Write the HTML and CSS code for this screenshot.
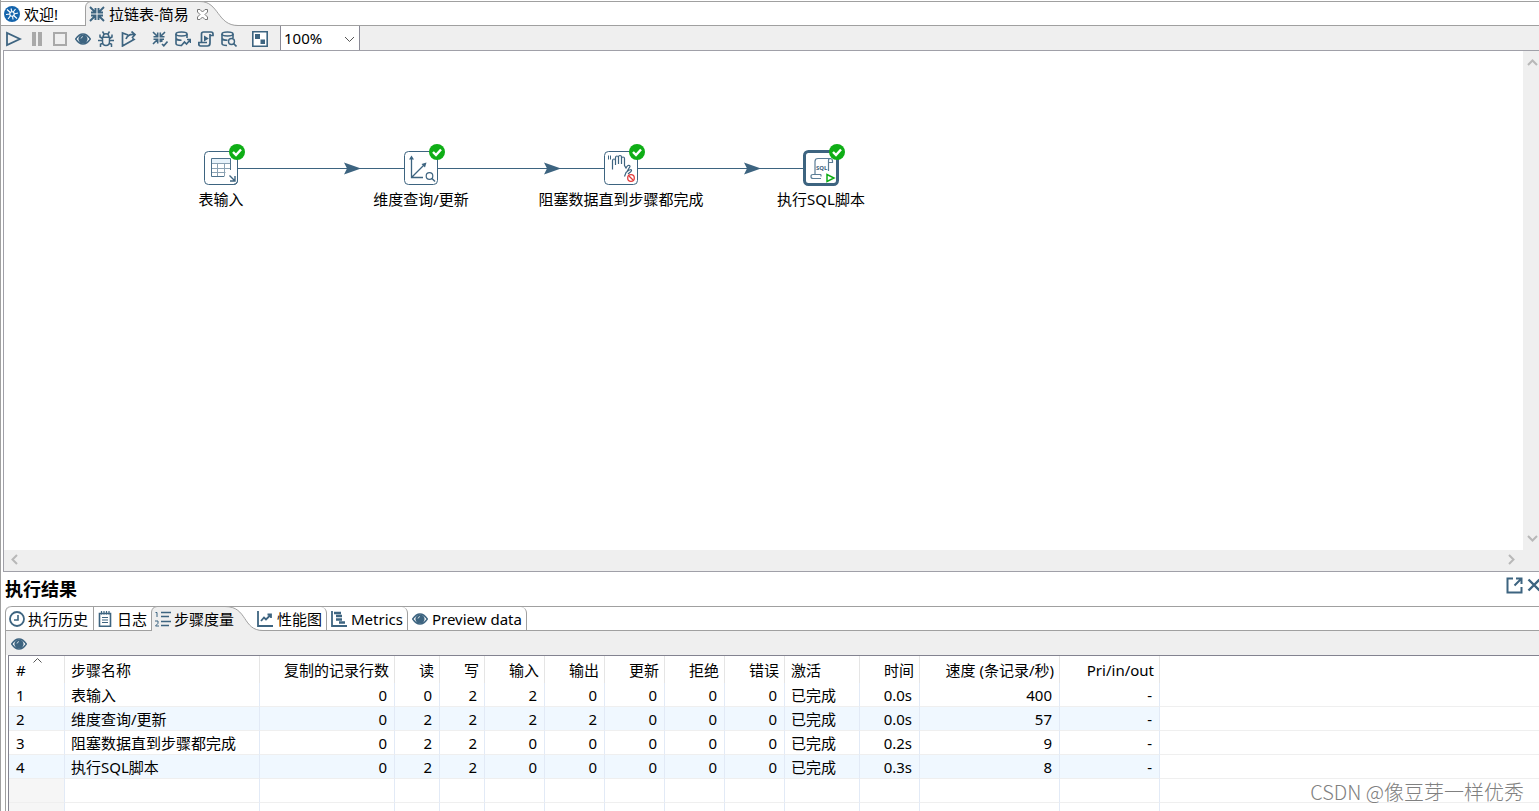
FILE: index.html
```html
<!DOCTYPE html>
<html lang="zh-CN">
<head>
<meta charset="utf-8">
<title>拉链表-简易</title>
<link rel="stylesheet" href="styles.css">
</head>
<body>
<svg class="defs" aria-hidden="true">
  <symbol id="eye" viewBox="0 0 16 16"><path d="M.700 8Q4 3 8 3T15.300 8Q12 13 8 13T.700 8Z" fill="#fff" stroke="#3d6480" stroke-width="1.400"/><circle cx="8" cy="8" r="4.600" fill="#3d6480"/><path d="M6 7.500Q6.200 5.800 8 5.600" stroke="#c9d6de" fill="none"/></symbol>
  <symbol id="shrink" viewBox="0 0 16 16"><path d="M1 1l5 5M15 1l-5 5M1 15l5-5M15 15l-5-5M2 6.500h4.500V2M9.500 2v4.500H14M2 9.500h4.500V14M9.500 14V9.500H14" fill="none" stroke="#3d6480" stroke-width="1.900"/></symbol>
  <symbol id="check" viewBox="0 0 16 16"><circle cx="8" cy="8" r="8" fill="#0fae16"/><path d="M4 8l3 3 5-5.500" stroke="#fff" stroke-width="2.400" fill="none"/></symbol>
  <symbol id="db" viewBox="0 0 16 16"><g fill="none" stroke="#3d6480" stroke-width="1.600"><ellipse cx="6.500" cy="3" rx="5.500" ry="2"/><path d="M1 3v9.500q0 2 5 2M1 7.500q1 1.800 5.500 1.800M12 3v4"/></g></symbol>
</svg>

<main class="app">
  <section class="editor">
    <nav class="tabs">
      <button class="tab tab-welcome"><svg class="icon" viewBox="0 0 16 16"><circle cx="8" cy="8" r="8" fill="#1464ac"/><g stroke="#fff" stroke-width="1.100" fill="none"><path d="M3 3.500l10 9M4 13l7.500-10M2 8.500l4-.500M10 8l4-1M7 2.500l1 3.500M8.500 10l.500 3.500"/><circle cx="8" cy="8" r="2.200" fill="#1464ac"/></g></svg>欢迎!</button>
      <button class="tab tab-active tab-file">
        <svg class="tab-shape" width="154" height="25" viewBox="0 0 154 25"><path d="M.500 25V6Q1 1 6 .500H115C134 .500 132 24.500 153 24.500V25Z" fill="#efefef"/><path d="M.500 25V6Q1 1 6 .500H115C134 .500 132 24.500 153 24.500" fill="none" stroke="#a0a0a0"/></svg>
        <svg class="icon"><use href="#shrink"/></svg><span>拉链表-简易</span>
        <svg class="close" width="11" height="11" viewBox="0 0 11 11"><path d="M.500 .500h2.500l2.500 2.500 2.500-2.500h2.500v2.500L8 5.500 10.500 8v2.500H8L5.500 8 3 10.500H.500V8L3 5.500 .500 3Z" fill="#fff" stroke="#777"/></svg>
      </button>
    </nav>

    <div class="toolbar">
      <button class="tool" aria-label="运行"><svg class="icon" viewBox="0 0 16 16"><path d="M1 2v12l13-6Z" fill="none" stroke="#3d6480" stroke-width="1.800"/></svg></button>
      <button class="tool" aria-label="暂停"><svg class="icon" viewBox="0 0 16 16"><path d="M3 1h4v14H3zM9 1h4v14H9z" fill="#a9a9a9"/></svg></button>
      <button class="tool" aria-label="停止"><svg class="icon" viewBox="0 0 16 16"><path d="M2 2h12v12H2z" fill="none" stroke="#a9a9a9" stroke-width="2"/></svg></button>
      <button class="tool" aria-label="预览"><svg class="icon"><use href="#eye"/></svg></button>
      <button class="tool" aria-label="调试"><svg class="icon" viewBox="0 0 16 16"><g fill="none" stroke="#3d6480" stroke-width="1.500"><path d="M5.200 5.500Q5.200 2.800 8 2.800t2.800 2.700M4.500 6.200h7v4.300Q11.500 14.500 8 14.500T4.500 10.500ZM6 3L4.500 .500M10 3l1.500-2.500M4.500 7.500L2 6V3.500M11.500 7.500L14 6V3.500M4.500 9.500H0M11.500 9.500H16M5 12l-2.500 1.200V16M11 12l2.500 1.200V16"/></g></svg></button>
      <button class="tool" aria-label="重放"><svg class="icon" viewBox="0 0 16 16"><path d="M7 4L1.500 2v13l11.500-6.500-1.500-1M5 8Q7 2.700 13.500 3.500M10.500 .500l3.500 3-3 3.500" fill="none" stroke="#3d6480" stroke-width="1.700"/></svg></button>
      <button class="tool tool-gap" aria-label="校验"><svg class="icon" viewBox="0 0 16 16"><path d="M1 1l4.500 4.500M13 1L8.500 5.500M1 13l4.500-4.500M1.500 5.700h4.200V1.500M8.300 1.500v4.200h4.200M1.500 8.300h4.200v4.200M12 8.300H8.300v3M8.500 8.500l2 2M10 13l1.800 1.800 3.700-4.300" fill="none" stroke="#3d6480" stroke-width="1.600"/></svg></button>
      <button class="tool" aria-label="影响分析"><svg class="icon"><use href="#db"/><path d="M6 15l3.500-4 2 2L15 9M12 8.500h3.500V12" fill="none" stroke="#3d6480" stroke-width="1.600"/></svg></button>
      <button class="tool" aria-label="生成SQL"><svg class="icon" viewBox="0 0 16 16"><path d="M3.500 11V3q0-2 2-2h7.500q2 0 2 2v1.500h-3M12 3v9q0 3-2.500 3H2.500Q.800 15 .800 13v-1.500H9" fill="none" stroke="#3d6480" stroke-width="1.700"/><path d="M6 4.500v6L10.800 7.500Z" fill="#3d6480"/></svg></button>
      <button class="tool" aria-label="浏览数据库"><svg class="icon"><use href="#db"/><circle cx="10.500" cy="10.500" r="3" fill="#efefef" stroke="#3d6480" stroke-width="1.400"/><path d="M12.500 12.500l3 3" stroke="#3d6480" stroke-width="1.600"/></svg></button>
      <button class="tool tool-gap" aria-label="显示结果"><svg class="icon" viewBox="0 0 16 16"><path d="M.800 .800h14.400v14.400H.800z" fill="#fff" stroke="#3d6480" stroke-width="1.600"/><path d="M3 3h5v5H3zM8.500 8.500h4.500v4.500H8.500z" fill="#3d6480"/></svg></button>
      <div class="zoom">
        <select class="zoom-select" aria-label="缩放"><option>100%</option></select>
        <svg class="zoom-arrow" width="11" height="7" viewBox="0 0 11 7"><path d="M1 1l4.500 4.500L10 1" fill="none" stroke="#555"/></svg>
      </div>
    </div>

    <div class="canvas-frame">
      <div class="canvas">
        <svg class="hops" width="900" height="240" viewBox="0 0 900 240">
          <path d="M234 117.500H400M434 117.500H600M634 117.500H800" stroke="#3d6480"/>
          <path d="M340 111.500l17 6-17 6 3-6ZM540 111.500l17 6-17 6 3-6ZM740 111.500l17 6-17 6 3-6Z" fill="#3d6480"/>
        </svg>
        <div class="node node-1">
          <svg class="node-icon" viewBox="0 0 34 34"><rect x=".500" y=".500" width="33" height="33" rx="4" fill="#fff" stroke="#3d6480"/><path d="M8 8h18v4H8z" fill="#e8f3fb"/><path d="M7.500 12.500h19M7.500 17.500h19M7.500 21.500h14M13.500 12.500v13M20.500 12.500v13" fill="none" stroke="#8ba2b3"/><path d="M20 25.500H7.500v-18h19V19" fill="none" stroke="#4d718b"/><path d="M23 21h10v10H23z" fill="#fff"/><path d="M25.500 24.500l5 5M31 25v5h-5" fill="none" stroke="#3d6480" stroke-width="1.400"/><path d="M33.500 17v12q0 4.500-4 4.500H20" fill="none" stroke="#3d6480"/></svg>
          <svg class="badge"><use href="#check"/></svg><span class="label">表输入</span>
        </div>
        <div class="node node-2">
          <svg class="node-icon" viewBox="0 0 34 34"><rect x=".500" y=".500" width="33" height="33" rx="4" fill="#fff" stroke="#3d6480"/><path d="M7.500 7v19.500H19M7.500 26.500L20.500 13.500" fill="none" stroke="#3d6480" stroke-width="1.300"/><path d="M7.500 4.500l2.500 4H5zM22.500 11.500l-1.500 5-3.500-3.500z" fill="#3d6480"/><circle cx="25.500" cy="25" r="3.300" fill="none" stroke="#3d6480" stroke-width="1.200"/><path d="M28 27.500l3 3" stroke="#3d6480" stroke-width="1.400"/></svg>
          <svg class="badge"><use href="#check"/></svg><span class="label">维度查询/更新</span>
        </div>
        <div class="node node-3">
          <svg class="node-icon" viewBox="0 0 34 34"><rect x=".500" y=".500" width="33" height="33" rx="4" fill="#fff" stroke="#3d6480"/><path d="M4.500 4.500v4M6.500 4.500v4" stroke="#3d6480"/><path d="M8.500 18.500V10q0-2 1.500-2t1.500 2v4V7q0-2 1.500-2t1.500 2v6V6q0-1.500 1.500-1.500T17.500 6v7V7.500q0-1.500 1.500-1.500t1.500 1.500v7l1.500 2.500q1-2 2-2.500 2-.500 2 1l-3 5M8.500 18.500v-4M20.500 25.500l1.500-4q3-3 5-3 1 1 0 2l-3 2.500" fill="none" stroke="#3d6480" stroke-width="1.200"/><circle cx="27" cy="27" r="3.300" fill="#fff" stroke="#e23c3c" stroke-width="1.300"/><path d="M25 25l4 4" stroke="#e23c3c" stroke-width="1.300"/></svg>
          <svg class="badge"><use href="#check"/></svg><span class="label">阻塞数据直到步骤都完成</span>
        </div>
        <div class="node node-4">
          <svg class="node-icon" viewBox="0 0 34 34"><rect x="0.500" y="0.500" width="33" height="33" rx="4" fill="#fff" stroke="#3d6480" stroke-width="3"/><path d="M11 23V10.500q0-3 3-3h12q2.500 0 2.500 2.500v1.500h-4M24.500 11.500V9.500q0-2 2-2M24.500 11.500V20M17 23.500H9q-2 0-2 2t2 2h8M17 23.500v2" fill="none" stroke="#5b7d96" stroke-width="1.200"/><text x="12" y="19" class="sql">SQL</text><path d="M23 23.500v7l7-3.500Z" fill="#fff" stroke="#0fae16" stroke-width="1.500"/></svg>
          <svg class="badge"><use href="#check"/></svg><span class="label">执行SQL脚本</span>
        </div>
      </div>
      <div class="scroll-v"><svg width="11" height="7" viewBox="0 0 11 7"><path d="M1 6l4.500-4.500L10 6" class="arrow"/></svg><svg width="11" height="7" viewBox="0 0 11 7"><path d="M1 1l4.500 4.500L10 1" class="arrow"/></svg></div>
      <div class="scroll-h"><svg width="7" height="11" viewBox="0 0 7 11"><path d="M6 1L1.500 5.500 6 10" class="arrow"/></svg><svg width="7" height="11" viewBox="0 0 7 11"><path d="M1 1l4.500 4.500L1 10" class="arrow"/></svg></div>
    </div>
  </section>

  <section class="results">
    <header class="results-head">
      <h2 class="results-title">执行结果</h2>
      <div class="results-actions">
        <button class="tool-plain" aria-label="最大化"><svg width="17" height="17" viewBox="0 0 17 17"><path d="M7 1.500H1.500v14h14V10M10 1.500h5.500V7M15 2L8.500 8.500" fill="none" stroke="#3d6480" stroke-width="2"/></svg></button>
        <button class="tool-plain" aria-label="关闭"><svg width="14" height="14" viewBox="0 0 14 14"><path d="M1.500 1.500l11 11M12.500 1.500l-11 11" stroke="#3d6480" stroke-width="2.400"/></svg></button>
      </div>
    </header>
    <div class="results-body">
      <nav class="tabs tabs-results">
        <button class="tab tab-sub tab-history"><svg class="icon" viewBox="0 0 16 16"><circle cx="8" cy="8" r="7" fill="none" stroke="#3d6480" stroke-width="1.800"/><path d="M9 4v5H5" fill="none" stroke="#3d6480" stroke-width="1.600"/></svg>执行历史</button>
        <button class="tab tab-sub tab-log"><svg class="icon" viewBox="0 0 16 16"><path d="M2.500 2.500h11v12.700h-11z" fill="none" stroke="#3d6480" stroke-width="1.600"/><path d="M4.500 0v3.500M7 0v3.500M9.500 0v3.500M12 0v3.500M5 6.500h6M5 9h6M5 11.500h6" stroke="#3d6480" stroke-width="1.200"/></svg>日志</button>
        <button class="tab tab-sub tab-active tab-metrics">
          <svg class="tab-shape" width="113" height="25" viewBox="0 0 113 25"><path d="M.500 25V6Q1 1 6 .500H74C97 .500 91 24.500 112 24.500V25Z" fill="#efefef"/><path d="M.500 25V6Q1 1 6 .500H74C97 .500 91 24.500 112 24.500" fill="none" stroke="#a0a0a0"/></svg>
          <svg class="icon" viewBox="0 0 16 16"><path d="M6 1.500h10M6 5.500h8M6 10.500h10M6 14.500h8" stroke="#3d6480" stroke-width="1.400"/><path d="M.500 1.500h1.500V6M0 10h3v2.300L.500 15H4" fill="none" stroke="#3d6480"/></svg><span>步骤度量</span>
        </button>
        <button class="tab tab-sub tab-right"><svg class="icon" viewBox="0 0 16 16"><path d="M1 0v15h15M4 10l3-3.500 2 2L13.500 4M10.500 3.500H14V7" fill="none" stroke="#3d6480" stroke-width="1.800"/></svg>性能图</button>
        <button class="tab tab-sub tab-right"><svg class="icon" viewBox="0 0 16 16"><path d="M1 0v15h15" fill="none" stroke="#3d6480" stroke-width="1.800"/><path d="M3 2h7M5 5h6M5 8.500h6M8 11.500h6" stroke="#3d6480" stroke-width="2.400"/></svg>Metrics</button>
        <button class="tab tab-sub tab-right"><svg class="icon"><use href="#eye"/></svg>Preview data</button>
      </nav>
      <div class="toolbar toolbar-results"><button class="tool" aria-label="预览"><svg class="icon"><use href="#eye"/></svg></button></div>
      <div class="grid-wrap">
        <table class="grid">
          <colgroup><col class="c-no"><col class="c-name"><col class="c-copy"><col class="c-rw"><col class="c-rw"><col class="c-num"><col class="c-num"><col class="c-num"><col class="c-num"><col class="c-num"><col class="c-state"><col class="c-num"><col class="c-speed"><col class="c-pri"><col></colgroup>
          <thead><tr><th class="left no">#<svg class="sort" width="9" height="5" viewBox="0 0 9 5"><path d="M.500 4.500l4-4 4 4" fill="none" stroke="#555"/></svg></th><th class="left">步骤名称</th><th>复制的记录行数</th><th>读</th><th>写</th><th>输入</th><th>输出</th><th>更新</th><th>拒绝</th><th>错误</th><th class="left">激活</th><th>时间</th><th>速度 (条记录/秒)</th><th>Pri/in/out</th><th class="rest"></th></tr></thead>
          <tbody>
            <tr><td class="left no">1</td><td class="left">表输入</td><td>0</td><td>0</td><td>2</td><td>2</td><td>0</td><td>0</td><td>0</td><td>0</td><td class="left">已完成</td><td>0.0s</td><td>400</td><td>-</td><td class="rest"></td></tr>
            <tr class="alt"><td class="left no">2</td><td class="left">维度查询/更新</td><td>0</td><td>2</td><td>2</td><td>2</td><td>2</td><td>0</td><td>0</td><td>0</td><td class="left">已完成</td><td>0.0s</td><td>57</td><td>-</td><td class="rest"></td></tr>
            <tr><td class="left no">3</td><td class="left">阻塞数据直到步骤都完成</td><td>0</td><td>2</td><td>2</td><td>0</td><td>0</td><td>0</td><td>0</td><td>0</td><td class="left">已完成</td><td>0.2s</td><td>9</td><td>-</td><td class="rest"></td></tr>
            <tr class="alt"><td class="left no">4</td><td class="left">执行SQL脚本</td><td>0</td><td>2</td><td>2</td><td>0</td><td>0</td><td>0</td><td>0</td><td>0</td><td class="left">已完成</td><td>0.3s</td><td>8</td><td>-</td><td class="rest"></td></tr>
            <tr class="empty"><td></td><td></td><td></td><td></td><td></td><td></td><td></td><td></td><td></td><td></td><td></td><td></td><td></td><td></td><td class="rest"></td></tr>
            <tr class="empty"><td></td><td></td><td></td><td></td><td></td><td></td><td></td><td></td><td></td><td></td><td></td><td></td><td></td><td></td><td class="rest"></td></tr>
          </tbody>
        </table>
      </div>
    </div>
  </section>
  <div class="watermark">CSDN @像豆芽一样优秀</div>
</main>
</body>
</html>
```
FILE: styles.css
```css
* { box-sizing: border-box; }
body {
  margin: 0;
  background: #fff;
  color: #000;
  font: 15px/20px "Noto Sans", "Noto Sans CJK SC", sans-serif;
}
button, select { font: inherit; color: inherit; border: 0; padding: 0; background: none; }
svg { display: block; flex: none; }
.defs { position: absolute; width: 0; height: 0; }
.icon { width: 16px; height: 16px; }

.app {
  position: relative;
  display: flex;
  flex-direction: column;
  height: 100vh;
  overflow: hidden;
  border-left: 1px solid #a0a0a0;
}
.editor { flex: 1; min-height: 0; display: flex; flex-direction: column; padding-top: 1px; }

/* tab strips */
.tabs { display: flex; height: 25px; border-top: 1px solid #a0a0a0; border-bottom: 1px solid #a0a0a0; flex: none; }
.tab { position: relative; display: flex; align-items: center; gap: 4px; height: 23px; white-space: nowrap; }
.tab-welcome { width: 84px; padding-left: 3px; }
.tab-active { height: 24px; }
.tab-active > * { position: relative; }
.tab-active > .tab-shape { position: absolute; left: 0; top: -1px; }
.tab-file { padding-left: 4px; }
.close { margin-left: 4px; }

.toolbar { display: flex; align-items: center; height: 24px; padding-left: 1px; background: #efefef; flex: none; }
.tool { display: grid; place-items: center; width: 23px; height: 24px; padding-top: 2px; }
.tool-gap { margin-left: 8px; }
.zoom { position: relative; margin-left: 9px; width: 80px; height: 24px; background: #fff; border: solid #8a8a96; border-width: 0 1px; }
.zoom-select { appearance: none; width: 100%; height: 100%; padding-left: 3px; outline: 0; }
.zoom-arrow { position: absolute; right: 4px; top: 10px; pointer-events: none; }

/* drawing area */
.canvas-frame {
  flex: 1;
  min-height: 0;
  display: grid;
  grid-template: 1fr 21px / 1fr 16px;
  margin-left: 2px;
  border: solid #a0a0a8;
  border-width: 1px 0 1px 1px;
}
.canvas { position: relative; overflow: hidden; background: #fff; }
.scroll-v, .scroll-h { display: flex; justify-content: space-between; align-items: center; background: #efefef; }
.scroll-v { flex-direction: column; padding: 8px 0 8px 3px; }
.scroll-h { grid-column: 1 / 3; padding: 0 24px 2px 7px; }
.arrow { fill: none; stroke: #b8b8b8; stroke-width: 2; }
.hops { position: absolute; left: 0; top: 0; }
.node { position: absolute; top: 100px; width: 34px; height: 34px; }
.node-1 { left: 200px; }
.node-2 { left: 400px; }
.node-3 { left: 600px; }
.node-4 { left: 800px; }
.node-icon { width: 34px; height: 34px; overflow: visible; }
.badge { position: absolute; left: 25px; top: -7px; width: 16px; height: 16px; }
.label { position: absolute; left: 50%; top: 38px; transform: translateX(-50%); white-space: nowrap; }
.sql { font: bold 6px "Noto Sans", sans-serif; fill: #3d6480; }

/* execution results */
.results { flex: 0 0 239px; display: flex; flex-direction: column; min-height: 0; overflow: hidden; }
.results-head { display: flex; justify-content: space-between; height: 34px; padding-left: 4px; flex: none; }
.results-title { margin: 0; padding-top: 5px; font-size: 18px; line-height: 24px; }
.results-actions { display: flex; align-items: center; gap: 4px; height: 26px; margin-right: -2px; }
.results-body { flex: 1; min-height: 0; display: flex; flex-direction: column; margin-left: 4px; border-left: 1px solid #a0a0a0; border-top-left-radius: 6px; }
.tabs-results { border-top-left-radius: 6px; }
.tab-history { width: 88px; padding-left: 3px; border-right: 1px solid #a0a0a0; }
.tab-log { width: 57px; padding-left: 3px; }
.tab-metrics { width: 102px; padding-left: 4px; gap: 3px; }
.tab-right { padding: 0 4px; border-right: 1px solid #a0a0a0; border-top-right-radius: 6px; }
.tab-history { gap: 3px; }
.toolbar-results { padding-left: 1px; }
.grid-wrap { flex: 1; min-height: 0; overflow: hidden; margin-left: 2px; border: solid #838390; border-width: 1px 0 0 1px; }

.grid { width: 100%; table-layout: fixed; border-collapse: separate; border-spacing: 0; }
.c-no { width: 56px; }
.c-name { width: 195px; }
.c-copy { width: 135px; }
.c-rw { width: 45px; }
.c-num { width: 60px; }
.c-state { width: 75px; }
.c-speed { width: 140px; }
.c-pri { width: 100px; }
.grid th { position: relative; height: 27px; padding: 1px 5px 0 0; font-weight: normal; text-align: right; white-space: nowrap; border-right: 1px solid #e5e5e5; }
.grid td { height: 24px; padding: 0 7px 0 0; text-align: right; white-space: nowrap; border-right: 1px solid #e2eaf6; border-bottom: 1px solid #efefef; }
.grid .left { text-align: left; padding-left: 6px; padding-right: 0; }
.grid .no { padding-left: 7px; }
.grid .rest { border-right: 0; }
.alt td:not(.rest) { background: #f0f8ff; }
.empty td:first-child { background: #f6f6f6; }
.sort { position: absolute; left: 24px; top: 2px; }

.watermark { position: absolute; right: 15px; bottom: 4px; font: 300 20px/30px "Noto Sans CJK SC", sans-serif; color: #808080; }
```
